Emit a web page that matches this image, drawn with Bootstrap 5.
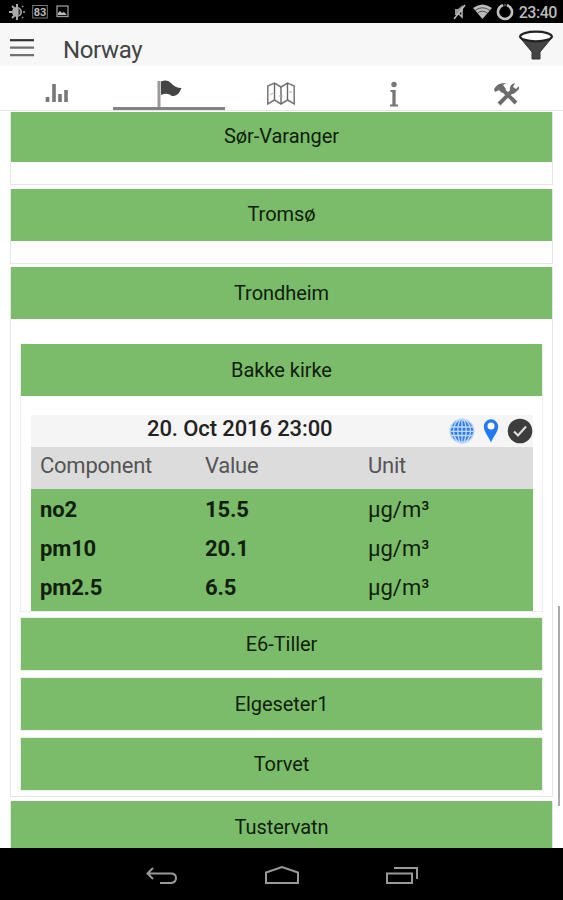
<!DOCTYPE html>
<html lang="en">
<head>
<meta charset="utf-8">
<meta name="viewport" content="width=device-width, initial-scale=1">
<title>Norway</title>
<link href="https://cdn.jsdelivr.net/npm/bootstrap@5.3.0/dist/css/bootstrap.min.css" rel="stylesheet">
<style>
body{font-family:Roboto,sans-serif;font-size:20px;line-height:24px;color:#10200c;height:900px;overflow:hidden}
svg{display:block;flex:none}
.status-bar{height:23px;background:#000;color:#bbb;font-size:16px;padding:0 6px 0 9px}
.clock{letter-spacing:-.45px;line-height:23px;padding-top:2px;font-weight:500}
.app-header{height:43px;background:#f7f7f7;padding:0 9px 0 10px}
.app-title{font-size:24px;color:#444;padding-left:28px;padding-top:11px;line-height:32px;letter-spacing:-.35px}
.tab-strip{height:45px;border-bottom:1px solid #e4e4e4}
.tab-strip .nav-link{height:44px;padding:0;color:#777;border-radius:0;flex:1 1 0;min-width:0}
.tab-strip .nav-link.active{border-bottom:3px solid #858287}
.stations{height:737px;padding:1px 10px 0}
.region{border:1px solid #e6e6e6;border-top:0;border-radius:0;margin-bottom:4px}
.region:nth-child(2){margin-bottom:3px}
.bar-title{height:52px;background:#7abc6a;line-height:53px;border-radius:0;letter-spacing:-.05px}
.region:nth-child(2) > .bar-title{line-height:51px}
.first .bar-title{height:50px;line-height:48px}
.spacer{height:22px}
.inner{padding:25px 9px 5px}
.place{border:1px solid #eee;border-radius:0;margin-bottom:6px}
.place:first-child{margin-bottom:5px}
.place:last-child{margin-bottom:0}
.reading{padding:19px 9px 0 10px}
.date-row{height:32px;background:#f5f5f5;color:#222;font-size:22px;font-weight:500;padding-left:116px}
.date-row .when{line-height:27px;width:303px;letter-spacing:-.1px}
.cols{font-size:22px;padding-left:9px;display:grid;grid-template-columns:165px 163px 1fr}
.head-row{height:42px;background:#dcdcdc;color:#555;line-height:38px;letter-spacing:-.25px}
.values{background:#7abc6a;height:122px;padding-top:.6px}
.values .cols{line-height:39.3px}
.values b{font-weight:700;letter-spacing:-.15px}
.scroll-thumb{position:absolute;left:558px;top:606px;width:2px;height:200px;background:#aaa}
.nav-keys{height:52px;background:#000;padding:4px 144px 0}
</style>
<script src="https://cdn.jsdelivr.net/npm/bootstrap@5.3.0/dist/js/bootstrap.bundle.min.js"></script>
</head>
<body class="position-relative bg-white">
<div class="status-bar d-flex align-items-center">
  <svg width="18" height="18" viewBox="0 0 18 18"><circle cx="8" cy="9" r="5" fill="#aaa"/><path d="M8 1v16M3 3l3 3M3 15l3-3M0 9h4" stroke="#aaa" stroke-width="2"/><path d="M9.500 5a5 5 0 0 1 0 8z" fill="#333"/><path d="M13 3l1 1M15 8v2M13 15l1-1" stroke="#999" stroke-width="1.600"/></svg>
  <svg width="16" height="16" viewBox="0 0 16 16" style="margin-left:5px"><rect x=".7" y="1.500" width="14.600" height="12.500" fill="none" stroke="#777"/><text x="8" y="12" font-size="11" font-weight="700" text-anchor="middle" fill="#bbb">83</text></svg>
  <svg class="ms-2" width="13" height="13" viewBox="0 0 13 13"><rect x="1" y="1" width="11" height="10.500" fill="none" stroke="#999" stroke-width="1.300"/><path d="M2 10V8l2-2 2 2 2-1 3 3z" fill="#bbb"/></svg>
  <svg class="ms-auto" width="14" height="16" viewBox="0 0 14 16"><path d="M2 5h3l5-4v5L5 11H2z" fill="#999"/><path d="M1 15L12 1M9 6v7L6 10" fill="none" stroke="#bbb" stroke-width="1.500"/></svg>
  <svg width="19" height="15" viewBox="0 0 19 15" style="margin-left:6px"><path d="M0 4Q9.500-3 19 4L9.500 15z" fill="#bbb"/><path d="M2 6.500Q9.500 1 17 6.500M4 9.500Q9.500 5 15 9.500" fill="none" stroke="#333" stroke-width=".8"/></svg>
  <svg width="18" height="18" viewBox="0 0 18 18" style="margin-left:4px"><path d="M11 2.300A7 7 0 1 1 7 2.300" fill="none" stroke="#c2c2c2" stroke-width="2.600"/><path d="M7.500 2.200h3" stroke="#555" stroke-width="2"/></svg>
  <span class="clock" style="margin-left:5px">23:40</span>
</div>
<header class="app-header d-flex">
  <svg width="25" height="43" viewBox="0 0 25 43"><path d="M0 17.200h24" stroke="#333" stroke-width="2.200"/><path d="M0 24.700h24M0 32.200h24" stroke="#707070" stroke-width="2.200"/></svg>
  <div class="app-title">Norway</div>
  <svg class="ms-auto" width="36" height="43" viewBox="0 0 36 43"><path d="M1.500 14L14 29v7h8v-7L34.500 14z" fill="#444" stroke="#333" stroke-linejoin="round"/><ellipse cx="18" cy="13.500" rx="15.800" ry="4.800" fill="#fff" stroke="#222" stroke-width="2.200"/></svg>
</header>
<nav class="tab-strip nav flex-nowrap">
  <a class="nav-link d-flex justify-content-center"><svg width="24" height="44" viewBox="0 0 24 44"><path d="M3.500 31v5M10 18v18M16 28v8M22 24v12" stroke="#777" stroke-width="3.600"/></svg></a>
  <a class="nav-link active d-flex justify-content-center"><svg width="26" height="41" viewBox="0 0 26 41"><path d="M3 15v26" stroke="#999" stroke-width="3"/><path d="M5 15.500Q11 13 15 17Q19 22 25.500 22Q22 31 16 30Q11 26 5 29z" fill="#444"/></svg></a>
  <a class="nav-link d-flex justify-content-center"><svg width="28" height="44" viewBox="0 0 28 44"><path d="M.8 20L7.500 17 14 21 20.500 17 27.200 20V38L20.500 34 14 38 7.500 34 .8 38z" fill="#fff" stroke="#777" stroke-width="1.500"/><path d="M7.500 17v17M14 21v17M20.500 17v17" stroke="#666" stroke-width="1.400"/><path d="M3 29l3-2M12 30h4M22 26h3" stroke="#aaa"/></svg></a>
  <a class="nav-link d-flex justify-content-center"><svg width="10" height="44" viewBox="0 0 10 44"><circle cx="5" cy="18.500" r="2.700" fill="#777"/><path d="M1.500 25H6.500M1 39.500H9" fill="none" stroke="#777" stroke-width="1.800"/><path d="M5 24.500v15" stroke="#777" stroke-width="3.300"/></svg></a>
  <a class="nav-link d-flex justify-content-center"><svg width="26" height="44" viewBox="0 0 26 44"><path d="M7 22L22 37M18 25L5 38" stroke="#6c6c6c" stroke-width="4"/><path d="M1 26l-1-3Q4 16 12 17L9 19l3 4-4 4-3-3z" fill="#6c6c6c"/><path d="M21 17Q15 18 16 25T25 23V20L22 23 19 21z" fill="#6c6c6c"/></svg></a>
</nav>
<main class="stations overflow-hidden">
  <section class="card region first"><div class="bar-title text-center">Sør-Varanger</div><div class="spacer"></div></section>
  <section class="card region"><div class="bar-title text-center">Tromsø</div><div class="spacer"></div></section>
  <section class="card region"><div class="bar-title text-center">Trondheim</div>
    <div class="inner">
      <div class="card place border-top-0"><div class="bar-title text-center">Bakke kirke</div>
        <div class="reading">
          <div class="date-row d-flex">
            <span class="when">20. Oct 2016 23:00</span>
            <svg width="26" height="32" viewBox="0 0 26 32"><circle cx="13" cy="16" r="12.500" fill="#b5d0f7"/><circle cx="13" cy="16" r="11" fill="#2d7be8"/><g fill="none" stroke="#c4dafa" stroke-width="1.300"><path d="M2 12H24M2 16.300H24M2 20.500H24M13 4V28"/><ellipse cx="13" cy="16" rx="4.200" ry="12"/><ellipse cx="13" cy="16" rx="8.500" ry="12"/></g></svg>
            <svg width="16" height="32" viewBox="0 0 16 32" style="margin-left:8px"><path d="M8 27.500C6 22 .8 17 .8 11.500a7.200 7.200 0 0 1 14.400 0C15.200 17 10 22 8 27.500z" fill="#2478f2"/><circle cx="8" cy="11" r="3.500" fill="#fff"/></svg>
            <svg width="26" height="32" viewBox="0 0 26 32" style="margin-left:8px"><circle cx="13" cy="16" r="12.300" fill="#3d3d3d"/><path d="M7 16.500l4 4 8-9" fill="none" stroke="#ddd" stroke-width="2.200"/></svg>
          </div>
          <div class="cols head-row"><span>Component</span><span>Value</span><span>Unit</span></div>
          <div class="values">
            <div class="cols"><b>no2</b><b>15.5</b><span>µg/m³</span></div>
            <div class="cols"><b>pm10</b><b>20.1</b><span>µg/m³</span></div>
            <div class="cols"><b>pm2.5</b><b>6.5</b><span>µg/m³</span></div>
          </div>
        </div>
      </div>
      <div class="card place"><div class="bar-title text-center">E6-Tiller</div></div>
      <div class="card place"><div class="bar-title text-center">Elgeseter1</div></div>
      <div class="card place"><div class="bar-title text-center">Torvet</div></div>
    </div>
  </section>
  <section class="card region"><div class="bar-title text-center">Tustervatn</div></section>
</main>
<footer class="nav-keys d-flex justify-content-between align-items-center">
  <svg width="35" height="26" viewBox="0 0 35 26" fill="none" stroke="#999" stroke-width="2"><path d="M9 5L3.500 10.500 9 16M4 10.500H27Q32 10.500 32 15T27 20H16"/></svg>
  <svg width="36" height="26" viewBox="0 0 36 26" fill="none" stroke="#999" stroke-width="2"><path d="M2 20V9.500L18 4 34 9.500V20z"/></svg>
  <svg width="34" height="26" viewBox="0 0 34 26" fill="none" stroke="#999" stroke-width="2"><path d="M2 10.500H27V20H2zM9 5H32V16"/></svg>
</footer>
<div class="scroll-thumb"></div>
</body>
</html>
